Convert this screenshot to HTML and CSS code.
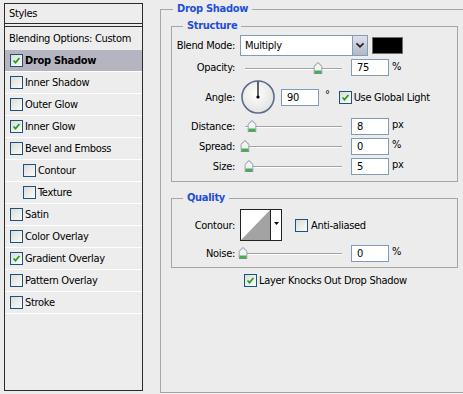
FILE: index.html
```html
<!DOCTYPE html>
<html lang="en">
<head>
  <meta charset="UTF-8" />
  <title>Layer Style - Drop Shadow</title>
  <link rel="stylesheet" href="styles.css">
</head>
<body>
  <div class="dialog">
    <!-- Styles list -->
    <aside class="styles-list">
      <div class="list-head">Styles</div>
      <div class="list-item blending">Blending Options: Custom</div>
      <div class="list-item selected">
        <span class="check"><svg viewBox="0 0 13 13"><path d="M3 6.5 L5.3 9 L10 3.5" /></svg></span><b>Drop Shadow</b>
      </div>
      <div class="list-item"><span class="check"></span>Inner Shadow</div>
      <div class="list-item"><span class="check"></span>Outer Glow</div>
      <div class="list-item">
        <span class="check"><svg viewBox="0 0 13 13"><path d="M3 6.5 L5.3 9 L10 3.5" /></svg></span>Inner Glow
      </div>
      <div class="list-item"><span class="check"></span>Bevel and Emboss</div>
      <div class="list-item sub"><span class="check"></span>Contour</div>
      <div class="list-item sub"><span class="check"></span>Texture</div>
      <div class="list-item"><span class="check"></span>Satin</div>
      <div class="list-item"><span class="check"></span>Color Overlay</div>
      <div class="list-item">
        <span class="check"><svg viewBox="0 0 13 13"><path d="M3 6.5 L5.3 9 L10 3.5" /></svg></span>Gradient Overlay
      </div>
      <div class="list-item"><span class="check"></span>Pattern Overlay</div>
      <div class="list-item"><span class="check"></span>Stroke</div>
    </aside>

    <!-- Drop shadow settings -->
    <fieldset class="group outer">
      <legend>Drop Shadow</legend>

      <fieldset class="group inner structure">
        <legend>Structure</legend>

        <div class="row blend-row">
          <label class="label">Blend Mode:</label>
          <div class="select">Multiply</div>
          <div class="select-btn"><svg viewBox="0 0 16 21"><path d="M4 8 L8 12 L12 8" /></svg></div>
          <div class="swatch"></div>
        </div>

        <div class="row opacity-row">
          <label class="label">Opacity:</label>
          <div class="slider"><div class="track"><span class="thumb" style="left: 75%"><svg viewBox="0 0 9 12"><path class="thumb-body" d="M4.5 0.5 L8.5 4.5 V11.5 H0.5 V4.5 Z" /><rect class="thumb-base" x="1" y="8.5" width="7" height="2.5" /></svg></span></div></div>
          <div class="num">75</div>
          <span class="unit">%</span>
        </div>

        <div class="row angle-row">
          <label class="label">Angle:</label>
          <svg class="dial" viewBox="0 0 36 34">
            <defs>
              <radialGradient id="dialFill" cx="45%" cy="40%" r="60%">
                <stop offset="0" stop-color="#ffffff" />
                <stop offset="1" stop-color="#e2e2e2" />
              </radialGradient>
            </defs>
            <circle cx="18" cy="17" r="16" fill="url(#dialFill)" stroke="#5b6b8c" stroke-width="1.6" />
            <line x1="18" y1="17" x2="18" y2="1.5" stroke="#000" stroke-width="1.2" />
            <circle cx="18" cy="17" r="1.6" fill="#000" />
          </svg>
          <div class="num angle-num">90</div>
          <span class="degree">°</span>
          <span class="check global-check"><svg viewBox="0 0 13 13"><path d="M3 6.5 L5.3 9 L10 3.5" /></svg></span>
          <span class="check-text">Use Global Light</span>
        </div>

        <div class="row">
          <label class="label">Distance:</label>
          <div class="slider"><div class="track"><span class="thumb" style="left: 7%"><svg viewBox="0 0 9 12"><path class="thumb-body" d="M4.5 0.5 L8.5 4.5 V11.5 H0.5 V4.5 Z" /><rect class="thumb-base" x="1" y="8.5" width="7" height="2.5" /></svg></span></div></div>
          <div class="num">8</div>
          <span class="unit">px</span>
        </div>

        <div class="row">
          <label class="label">Spread:</label>
          <div class="slider"><div class="track"><span class="thumb" style="left: 0%"><svg viewBox="0 0 9 12"><path class="thumb-body" d="M4.5 0.5 L8.5 4.5 V11.5 H0.5 V4.5 Z" /><rect class="thumb-base" x="1" y="8.5" width="7" height="2.5" /></svg></span></div></div>
          <div class="num">0</div>
          <span class="unit">%</span>
        </div>

        <div class="row">
          <label class="label">Size:</label>
          <div class="slider"><div class="track"><span class="thumb" style="left: 4%"><svg viewBox="0 0 9 12"><path class="thumb-body" d="M4.5 0.5 L8.5 4.5 V11.5 H0.5 V4.5 Z" /><rect class="thumb-base" x="1" y="8.5" width="7" height="2.5" /></svg></span></div></div>
          <div class="num">5</div>
          <span class="unit">px</span>
        </div>
      </fieldset>

      <fieldset class="group inner quality">
        <legend>Quality</legend>

        <div class="row contour-row">
          <label class="label">Contour:</label>
          <svg class="contour" viewBox="0 0 42 32">
            <rect x="0.5" y="0.5" width="41" height="31" fill="#fff" stroke="#222" />
            <polygon points="1,31 30,1 30,31" fill="#a3a3a3" />
            <line x1="30.5" y1="1" x2="30.5" y2="31" stroke="#222" />
            <polygon points="34,13 39,13 36.5,16" fill="#000" />
          </svg>
          <span class="check aa-check"></span>
          <span class="check-text">Anti-aliased</span>
        </div>

        <div class="row noise-row">
          <label class="label">Noise:</label>
          <div class="slider"><div class="track"><span class="thumb" style="left: -2%"><svg viewBox="0 0 9 12"><path class="thumb-body" d="M4.5 0.5 L8.5 4.5 V11.5 H0.5 V4.5 Z" /><rect class="thumb-base" x="1" y="8.5" width="7" height="2.5" /></svg></span></div></div>
          <div class="num">0</div>
          <span class="unit">%</span>
        </div>
      </fieldset>

      <div class="knockout">
        <span class="check"><svg viewBox="0 0 13 13"><path d="M3 6.5 L5.3 9 L10 3.5" /></svg></span>
        <span class="check-text">Layer Knocks Out Drop Shadow</span>
      </div>
    </fieldset>
  </div>
</body>
</html>
```

FILE: styles.css
```css
/* Reset */
* { margin: 0; padding: 0; box-sizing: border-box; }
body {
  width: 463px;
  height: 394px;
  overflow: hidden;
  background: #ececec;
  font-family: "DejaVu Sans Condensed", "DejaVu Sans", sans-serif;
  font-size: 11px;
  letter-spacing: -0.3px;
  color: #000;
}
.dialog {
  display: flex;
  align-items: flex-start;
}

/* Left styles list */
.styles-list {
  flex: none;
  margin: 3px 0 0 4px;
  width: 139px;
  height: 388px;
  border: 1px solid #2b2b2b;
  background: #ededed;
}
.list-head {
  height: 20px;
  line-height: 20px;
  padding-left: 4px;
  border-bottom: 1px solid #2b2b2b;
  margin-bottom: 2px;
}
.list-item {
  display: flex;
  align-items: center;
  height: 22px;
  padding-left: 5px;
  border-bottom: 1px solid #fff;
  white-space: nowrap;
}
.list-item.blending {
  height: 24px;
  padding-left: 4px;
  border-top: 1px solid #2b2b2b;
  border-bottom: none;
}
.list-item.selected { background: #b4b5c1; }
.list-item.sub { padding-left: 18px; }
.list-item .check { margin-right: 2px; }

/* Checkbox */
.check {
  display: inline-block;
  flex: none;
  width: 13px;
  height: 13px;
  border: 1px solid #1d5180;
  background: linear-gradient(135deg, #dcdcd7, #fbfbf9);
}
.check svg {
  display: block;
  width: 11px;
  height: 11px;
}
.check path {
  fill: none;
  stroke: #21a121;
  stroke-width: 2;
}
.check-text { margin-left: 2px; white-space: nowrap; }

/* Group boxes */
.group {
  border: 1px solid #a6a6a6;
  min-width: 0;
}
.group legend {
  padding: 0 4px;
  line-height: 14px;
  font-weight: bold;
  color: #1f4fd8;
}
.outer {
  flex: none;
  margin: 2px 0 0 17px;
  width: 320px;
  height: 391px;
  padding: 0 0 0 10px;
}
.outer > legend { margin-left: 2px; }
.inner {
  width: 287px;
}
.inner > legend { margin-left: 11px; }
.structure {
  margin-top: 3px;
  padding: 0 0 5px;
}
.quality {
  margin-top: 9px;
  padding: 4px 0 2px;
}

/* Rows */
.row {
  display: flex;
  align-items: center;
  height: 20px;
}
.label {
  width: 63px;
  margin-right: 5px;
  text-align: right;
  white-space: nowrap;
}
.blend-row { height: 24px; }
.opacity-row { height: 21px; }
.angle-row { height: 38px; }
.contour-row { height: 32px; }
.noise-row { height: 24px; }

.select {
  width: 112px;
  height: 21px;
  line-height: 19px;
  padding-left: 4px;
  border: 1px solid #7f9db9;
  border-right: none;
  background: #fff;
}
.select-btn {
  width: 16px;
  height: 21px;
  border: 1px solid #7f9db9;
  background: linear-gradient(#dfe1ea, #b3b7c6);
}
.select-btn svg { display: block; width: 14px; height: 19px; }
.select-btn path { fill: none; stroke: #222; stroke-width: 2; }
.swatch {
  width: 31px;
  height: 17px;
  margin-left: 4px;
  background: #000;
  border: 1px solid #6f6f6f;
}

/* Sliders */
.slider {
  position: relative;
  width: 107px;
  height: 100%;
}
.track {
  position: absolute;
  left: 5px;
  right: 5px;
  top: 50%;
  height: 2px;
  border-top: 1px solid #a3a3a3;
  border-bottom: 1px solid #fff;
}
.thumb {
  position: absolute;
  top: -7px;
  width: 9px;
  height: 12px;
  transform: translateX(-50%);
}
.thumb svg { display: block; width: 9px; height: 12px; }
.thumb-body { fill: #f3f3f1; stroke: #7d8a97; }
.thumb-base { fill: #3fb34a; }

.num {
  width: 38px;
  height: 17px;
  line-height: 15px;
  margin-left: 4px;
  padding-left: 5px;
  border: 1px solid #7f9db9;
  background: #fff;
}
.unit {
  margin-left: 3px;
  margin-bottom: 3px;
}

/* Angle */
.dial { width: 36px; height: 34px; flex: none; }
.angle-num { margin-left: 5px; }
.degree { margin: 0 0 6px 6px; }
.global-check { margin-left: 9px; }

/* Quality */
.contour { width: 42px; height: 32px; flex: none; }
.aa-check { margin-left: 13px; }
.aa-check + .check-text { margin-left: 3px; }

.knockout {
  display: flex;
  align-items: center;
  margin: 6px 0 0 73px;
  height: 13px;
}
```
